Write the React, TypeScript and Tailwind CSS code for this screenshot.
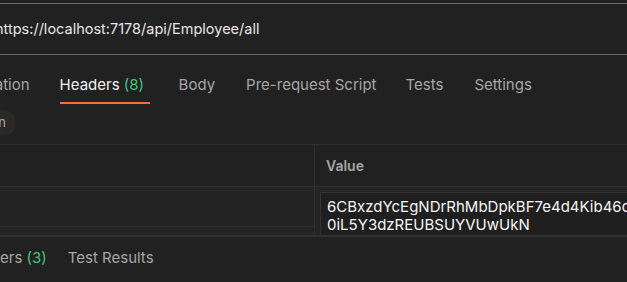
export default function App() {
  const tabs = [
    { label: "Body", left: "ml-[29px]" },
    { label: "Pre-request Script", left: "ml-[31px]" },
    { label: "Tests", left: "ml-[29px]" },
    { label: "Settings", left: "ml-[31px]" },
  ];

  return (
    <div className="w-[627px] h-[282px] overflow-hidden bg-[#212121] font-['Inter','Liberation_Sans',sans-serif] text-[15px]">
      {/* URL bar */}
      <div className="pt-[3px]">
        <div className="h-[52px] border-y border-[#6a6a6a] flex items-center whitespace-nowrap">
          <span className="ml-[-5px] text-[#e6e6e6] text-[14.5px]">https://localhost:7178/api/Employee/all</span>
        </div>
      </div>

      {/* Request tabs */}
      <div className="h-[49px] flex items-start pt-[19px] whitespace-nowrap">
        <span className="ml-[-65px] text-[#a6a6a6]">Authorization</span>
        <div className="ml-[30px] flex flex-col">
          <span className="text-[#f2f2f2]">
            Headers <span className="text-[#49c37a]">(8)</span>
          </span>
          <div className="mt-[5px] h-[2px] w-[90px] bg-[#ff6c37]" />
        </div>
        {tabs.map((t) => (
          <span key={t.label} className={`${t.left} text-[#a6a6a6]`}>
            {t.label}
          </span>
        ))}
      </div>

      {/* Sub-tab pill */}
      <div className="h-[40px] pt-[6px]">
        <div className="ml-[-40px] w-[56px] h-[26px] rounded-full bg-[#292929] flex items-center justify-end pr-[10px] text-[#a6a6a6] text-[13px]">
          n
        </div>
      </div>

      {/* Headers table */}
      <div className="h-[91px] border-t border-[#2e2e2e] overflow-hidden">
        <div className="flex h-[42px] border-b border-[#2e2e2e]">
          <div className="w-[315px] shrink-0 border-r border-[#2e2e2e]" />
          <div className="flex-1 min-w-0 flex items-center pl-[11px] text-[14px] font-semibold text-[#a6a6a6]">Value</div>
        </div>
        <div className="flex h-[60px] bg-[#242424]">
          <div className="w-[315px] shrink-0 border-r border-[#2e2e2e]">
            <div className="h-[40px] border-b border-[#2e2e2e]" />
          </div>
          <div className="flex-1 min-w-0 pl-[5px] pt-[5px]">
            <div className="h-[60px] border-l border-t border-[#333333] bg-[#1f1f1f] pl-[6px] pt-[5px] leading-[18px] text-[#f5f5f5] whitespace-nowrap">
              <div>6CBxzdYcEgNDrRhMbDpkBF7e4d4Kib46d</div>
              <div>0iL5Y3dzREUBSUYVUwUkN</div>
            </div>
          </div>
        </div>
      </div>

      {/* Response tabs */}
      <div className="border-t-2 border-[#303030] h-[45px] flex items-center whitespace-nowrap">
        <span className="ml-0 text-[#a6a6a6]">
          ers <span className="text-[#49c37a]">(3)</span>
        </span>
        <span className="ml-[21px] text-[#a6a6a6]">Test Results</span>
      </div>
    </div>
  );
}
